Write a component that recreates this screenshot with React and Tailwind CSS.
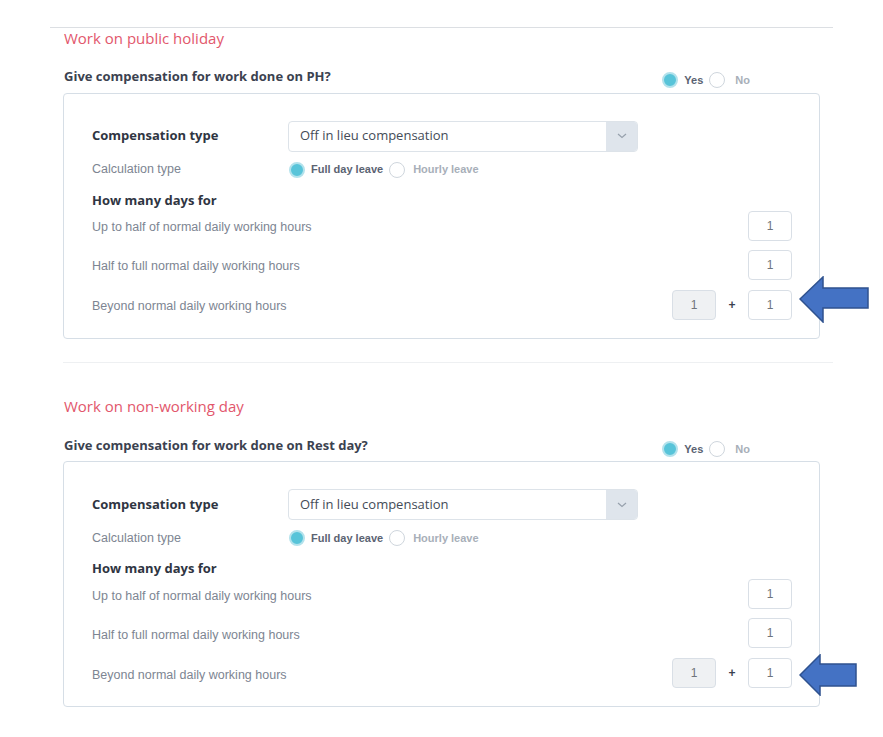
import React from "react";

const montserrat = { fontFamily: '"Open Sans", "Liberation Sans", sans-serif' };

const Radio = ({ checked }) =>
  checked ? (
    <span className="inline-block w-4 h-4 rounded-full bg-[#58c4d9] border-2 border-[#b3e2ec] shrink-0" />
  ) : (
    <span className="inline-block w-4 h-4 rounded-full bg-white border border-[#cfd6dd] shrink-0" />
  );

const NumBox = ({ value, muted }) => (
  <div
    className={`w-[44px] h-[30px] rounded-[4px] border border-[#d9dfe6] flex items-center justify-center text-[12px] text-[#6f747c] ${
      muted ? "bg-[#eff1f3]" : "bg-white"
    }`}
  >
    {value}
  </div>
);

const Arrow = ({ big }) =>
  big ? (
    <svg width="70" height="47" viewBox="0 0 70 47" className="absolute left-[51px] top-[-14px]">
      <polygon
        points="1,23 24,1 24,12 69,12 69,32 24,32 24,46"
        fill="#4472c4"
        stroke="#2f528f"
        strokeWidth="1.5"
      />
    </svg>
  ) : (
    <svg width="58" height="42" viewBox="0 0 58 42" className="absolute left-[51px] top-[-4px]">
      <polygon
        points="1,21 21,1 21,10 57,10 57,32 21,32 21,41"
        fill="#4472c4"
        stroke="#2f528f"
        strokeWidth="1.5"
      />
    </svg>
  );

const Row = ({ label, children }) => (
  <div className="flex items-center">
    <span className="text-[12.5px] leading-[16px] pt-[3px] text-[#7d8592]">{label}</span>
    <div className="ml-auto flex items-center">{children}</div>
  </div>
);

const Section = ({ title, question, bigArrow }) => (
  <div>
    {/* section title */}
    <div className="h-[20px] flex items-center pl-[14px] text-[15px] text-[#e2576c]" style={montserrat}>
      {title}
    </div>

    {/* question + yes/no */}
    <div className="mt-[18px] w-[770px] pl-[14px] flex items-start">
      <div className="text-[13px] leading-[20px] font-bold text-[#3b4250]" style={montserrat}>
        {question}
      </div>
      <div className="ml-auto mr-[70px] mt-[6px] flex items-center gap-[6px] text-[11px] font-bold">
        <Radio checked />
        <span className="text-[#5b6372]">Yes</span>
        <Radio />
        <span className="text-[#a8afb9] ml-[4px]">No</span>
      </div>
    </div>

    {/* bordered card */}
    <div className="mt-[4px] ml-[13px] w-[757px] border border-[#d6dee6] rounded-[4px] pl-[28px] pr-[27px] pt-[27px] pb-[18px]">
      <div className="flex items-center">
        <div className="w-[196px] text-[13px] font-bold text-[#2f3542]" style={montserrat}>
          Compensation type
        </div>
        <div className="w-[350px] h-[31px] border border-[#dde3e9] rounded-[4px] flex overflow-hidden">
          <div className="flex-1 flex items-center pl-[11px] text-[13px] text-[#444b57]" style={montserrat}>
            Off in lieu compensation
          </div>
          <div className="w-[31px] bg-[#dfe5ec] flex items-center justify-center">
            <svg width="10" height="6" viewBox="0 0 10 6">
              <path d="M1 1 L5 4.5 L9 1" fill="none" stroke="#97a1ad" strokeWidth="1.2" />
            </svg>
          </div>
        </div>
      </div>

      <div className="mt-[8px] h-[20px] flex items-center">
        <div className="w-[197px] text-[12.5px] text-[#7d8592]">Calculation type</div>
        <div className="flex items-center gap-[6px] text-[11px] font-bold">
          <Radio checked />
          <span className="text-[#5b6372]">Full day leave</span>
          <Radio />
          <span className="text-[#a8afb9] ml-[2px]">Hourly leave</span>
        </div>
      </div>

      <div className="mt-[11px] h-[20px] flex items-center text-[13px] font-bold text-[#2f3542]" style={montserrat}>
        How many days for
      </div>

      <div className="flex flex-col gap-[9px]">
        <Row label="Up to half of normal daily working hours">
          <NumBox value="1" />
        </Row>
        <Row label="Half to full normal daily working hours">
          <NumBox value="1" />
        </Row>
        <div className="mt-[1px]">
          <Row label="Beyond normal daily working hours">
            <NumBox value="1" muted />
            <span className="w-[32px] text-center text-[12px] font-bold text-[#3b4250]">+</span>
            <div className="relative">
              <NumBox value="1" />
              <Arrow big={bigArrow} />
            </div>
          </Row>
        </div>
      </div>
    </div>
  </div>
);

export default function App() {
  return (
    <div className="w-[883px] h-[737px] bg-white overflow-hidden" style={{ fontFamily: '"Liberation Sans", Arial, sans-serif' }}>
      <div className="ml-[50px] mt-[27px] w-[783px] border-t border-[#dcdfe3]">
        <Section title="Work on public holiday" question="Give compensation for work done on PH?" bigArrow />
        <div className="mt-[23px] ml-[13px] border-t border-[#eef0f2]" />
        <div className="mt-[34px]">
          <Section title="Work on non-working day" question="Give compensation for work done on Rest day?" />
        </div>
      </div>
    </div>
  );
}
